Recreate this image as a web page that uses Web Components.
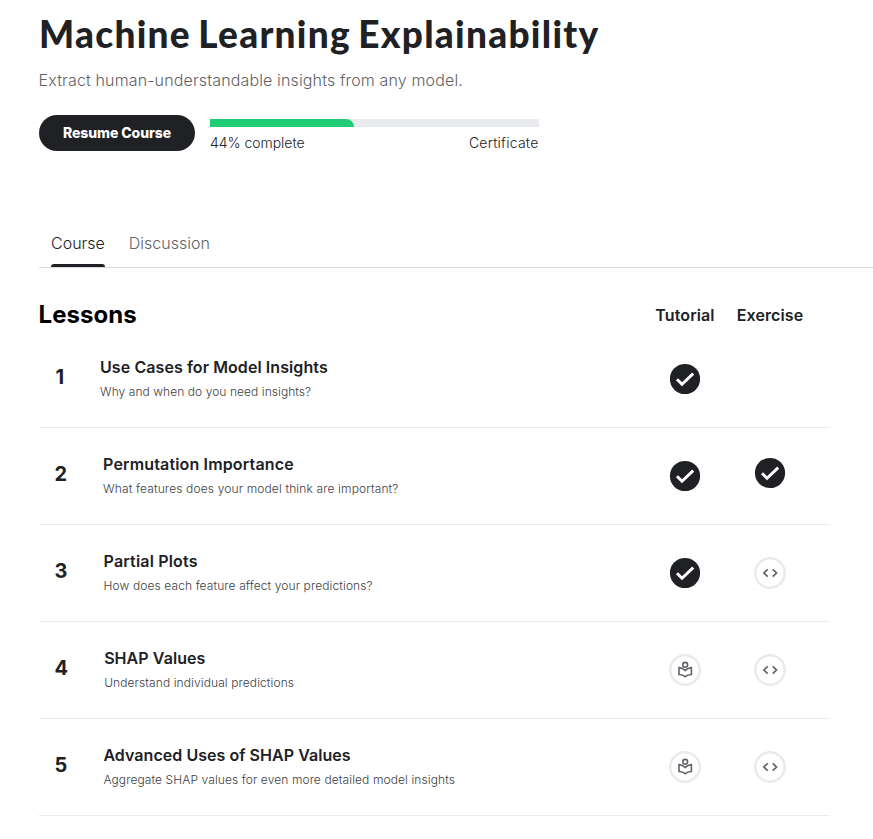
<!DOCTYPE html>
<html lang="en">
<head>
<meta charset="utf-8">
<title>Machine Learning Explainability</title>
<style>
  body { margin: 0; background: #fff; font-family: Inter, "Liberation Sans", sans-serif; color: #202124; overflow: hidden; }
</style>
</head>
<body>
<course-page></course-page>
<script>
const define = (name, html, setup) => {
  const template = document.createElement('template');
  template.innerHTML = html;
  customElements.define(name, class extends HTMLElement {
    connectedCallback() {
      if (this.shadowRoot) return;
      const root = this.attachShadow({ mode: 'open' });
      root.append(template.content.cloneNode(true));
      if (setup) setup(this, root);
    }
  });
};

define('course-button', `
  <style>
    :host { display: flex; align-items: center; justify-content: center; box-sizing: border-box; width: 156px; height: 36px; border-radius: 18px; background: #202124; color: #fff; font-size: 14px; font-weight: 800; line-height: 20px; letter-spacing: -.08px; white-space: nowrap; }
  </style><slot></slot>`);

define('course-progress', `
  <style>
    :host { display: block; width: 329px; padding-top: 4px; }
    .track { height: 8px; background: #e8eaed; }
    .bar { width: var(--done); height: 8px; background: #20cc74; border-radius: 0 8px 0 0; }
    .labels { display: flex; justify-content: space-between; margin-top: 6px; font-size: 14px; line-height: 20px; font-weight: 300; white-space: nowrap; letter-spacing: -.04px; }
    ::slotted([slot="end"]) { letter-spacing: .24px; margin-right: .5px; }
  </style>
  <div class="track"><div class="bar"></div></div>
  <div class="labels"><slot name="start"></slot><slot name="end"></slot></div>`,
  (el) => el.style.setProperty('--done', el.getAttribute('value')));

define('course-header', `
  <style>
    :host { display: block; padding: 12px 0 0 39px; height: 213px; box-sizing: border-box; }
    h1 { margin: 0; font: 900 37px/44px Lato, sans-serif; letter-spacing: 1.28px; word-spacing: -2.8px; white-space: nowrap; }
    p { margin: 14px 0 0 -.4px; font-size: 16px; line-height: 20px; font-weight: 300; letter-spacing: .14px; color: #5f6368; }
    .actions { display: flex; align-items: flex-start; gap: 15px; margin-top: 25px; }
  </style>
  <h1><slot name="title"></slot></h1>
  <p><slot name="summary"></slot></p>
  <div class="actions"><slot></slot></div>`);

define('course-tab', `
  <style>
    :host { display: flex; flex-direction: column; justify-content: space-between; height: 35px; font-size: 16px; line-height: 22px; font-weight: 300; color: #5f6368; }
    :host([selected]) { color: #202124; }
    :host([selected])::after { content: ""; height: 3px; background: #202124; border-radius: 3px 3px 0 0; }
  </style><slot></slot>`);

define('course-tabs', `
  <style>
    :host { display: flex; gap: 24px; margin-left: 39px; padding: 19px 0 0 12px; border-bottom: 1px solid #dadce0; }
  </style><slot></slot>`);

define('status-icon', `
  <style>
    :host { display: block; width: 32px; height: 32px; }
    svg { display: block; width: 32px; height: 32px; }
  </style>
  <svg class="done" viewBox="0 0 32 32"><circle cx="16" cy="16" r="15.1" fill="#202124"/><path d="M8 16.200l5 5.100L24.200 10.600" fill="none" stroke="#fff" stroke-width="2.900"/></svg>
  <svg class="read" viewBox="0 0 32 32"><circle cx="16" cy="16" r="14.750" fill="#fff" stroke="#e8eaed" stroke-width="2.500"/><g fill="none" stroke="#5f6368" stroke-width="1.600"><circle cx="16.200" cy="10.800" r="2.400"/><path d="M10 13.600q3.900 .400 6.200 2.900q2.400-2.500 6.200-2.900v6.900q-3.900 .200-6.200 2.200q-2.200-2-6.200-2.200z"/></g></svg>
  <svg class="code" viewBox="0 0 32 32"><circle cx="16" cy="16" r="14.750" fill="#fff" stroke="#e8eaed" stroke-width="2.500"/><path d="M13.700 12.300L9.900 16l3.800 3.700M18.700 12.300l3.800 3.700-3.800 3.700" fill="none" stroke="#5f6368" stroke-width="1.700"/></svg>`,
  (el, root) => root.querySelectorAll('svg').forEach(s => { if (!s.classList.contains(el.getAttribute('kind'))) s.remove(); }));

define('lesson-row', `
  <style>
    :host { display: grid; grid-template-columns: auto 1fr 85px 85px; box-sizing: border-box; height: 97px; padding: 0 17px 0 15.6px; border-bottom: 1px solid #e8eaed; }
    .number { font-size: 20px; line-height: 24px; font-weight: 650; padding: 34px 36px 0 0; }
    h3 { margin: 0; padding-top: 24px; font-size: 16px; line-height: 24px; font-weight: 600; letter-spacing: var(--title-spacing, .08px); white-space: nowrap; }
    p { margin: 4px 0 0; font-size: 12px; line-height: 18px; font-weight: 300; letter-spacing: var(--text-spacing, .1px); color: #3c4043; white-space: nowrap; }
    .cell { display: flex; justify-content: center; align-items: flex-start; padding-top: 32px; }
    ::slotted([kind="done"][slot="exercise"]) { margin-top: -3px; }
  </style>
  <div class="number"></div>
  <div><h3><slot name="title"></slot></h3><p><slot></slot></p></div>
  <div class="cell"><slot name="tutorial"></slot></div>
  <div class="cell"><slot name="exercise"></slot></div>`,
  (el, root) => root.querySelector('.number').textContent = el.getAttribute('number'));

define('lesson-list', `
  <style>
    :host { display: block; width: 790px; margin: 0 0 0 39px; }
    header { display: grid; grid-template-columns: 1fr 85px 85px; align-items: center; height: 63px; box-sizing: border-box; padding: 30px 17px 0 0; }
    h2 { margin: 0 0 0 -.4px; color: #000; font-size: 24px; line-height: 32px; font-weight: 650; letter-spacing: .03px; }
    span { text-align: center; font-size: 16px; line-height: 24px; font-weight: 600; letter-spacing: .1px; padding: 1px 0 0 1px; }
  </style>
  <header><h2>Lessons</h2><span>Tutorial</span><span>Exercise</span></header>
  <slot></slot>`);

define('course-page', `
  <style>
    :host { display: block; width: 873px; height: 839px; overflow: hidden; }
    lesson-row[number="1"] { --text-spacing: .06px; padding-left: 16.4px; }
    lesson-row[number="2"] { --title-spacing: .15px; --text-spacing: .14px; padding-left: 15.5px; }
    lesson-row[number="3"] { --title-spacing: .18px; --text-spacing: .11px; }
    lesson-row[number="5"] { --title-spacing: .05px; --text-spacing: .1px; }
  </style>
  <course-header>
    <span slot="title">Machine Learning Explainability</span>
    <span slot="summary">Extract human-understandable insights from any model.</span>
    <course-button>Resume Course</course-button>
    <course-progress value="43.8%"><span slot="start">44% complete</span><span slot="end">Certificate</span></course-progress>
  </course-header>
  <course-tabs><course-tab selected>Course</course-tab><course-tab>Discussion</course-tab></course-tabs>
  <lesson-list>
    <lesson-row number="1"><span slot="title">Use Cases for Model Insights</span>Why and when do you need insights?<status-icon slot="tutorial" kind="done"></status-icon></lesson-row>
    <lesson-row number="2"><span slot="title">Permutation Importance</span>What features does your model think are important?<status-icon slot="tutorial" kind="done"></status-icon><status-icon slot="exercise" kind="done"></status-icon></lesson-row>
    <lesson-row number="3"><span slot="title">Partial Plots</span>How does each feature affect your predictions?<status-icon slot="tutorial" kind="done"></status-icon><status-icon slot="exercise" kind="code"></status-icon></lesson-row>
    <lesson-row number="4"><span slot="title">SHAP Values</span>Understand individual predictions<status-icon slot="tutorial" kind="read"></status-icon><status-icon slot="exercise" kind="code"></status-icon></lesson-row>
    <lesson-row number="5"><span slot="title">Advanced Uses of SHAP Values</span>Aggregate SHAP values for even more detailed model insights<status-icon slot="tutorial" kind="read"></status-icon><status-icon slot="exercise" kind="code"></status-icon></lesson-row>
  </lesson-list>`);
</script>
</body>
</html>
